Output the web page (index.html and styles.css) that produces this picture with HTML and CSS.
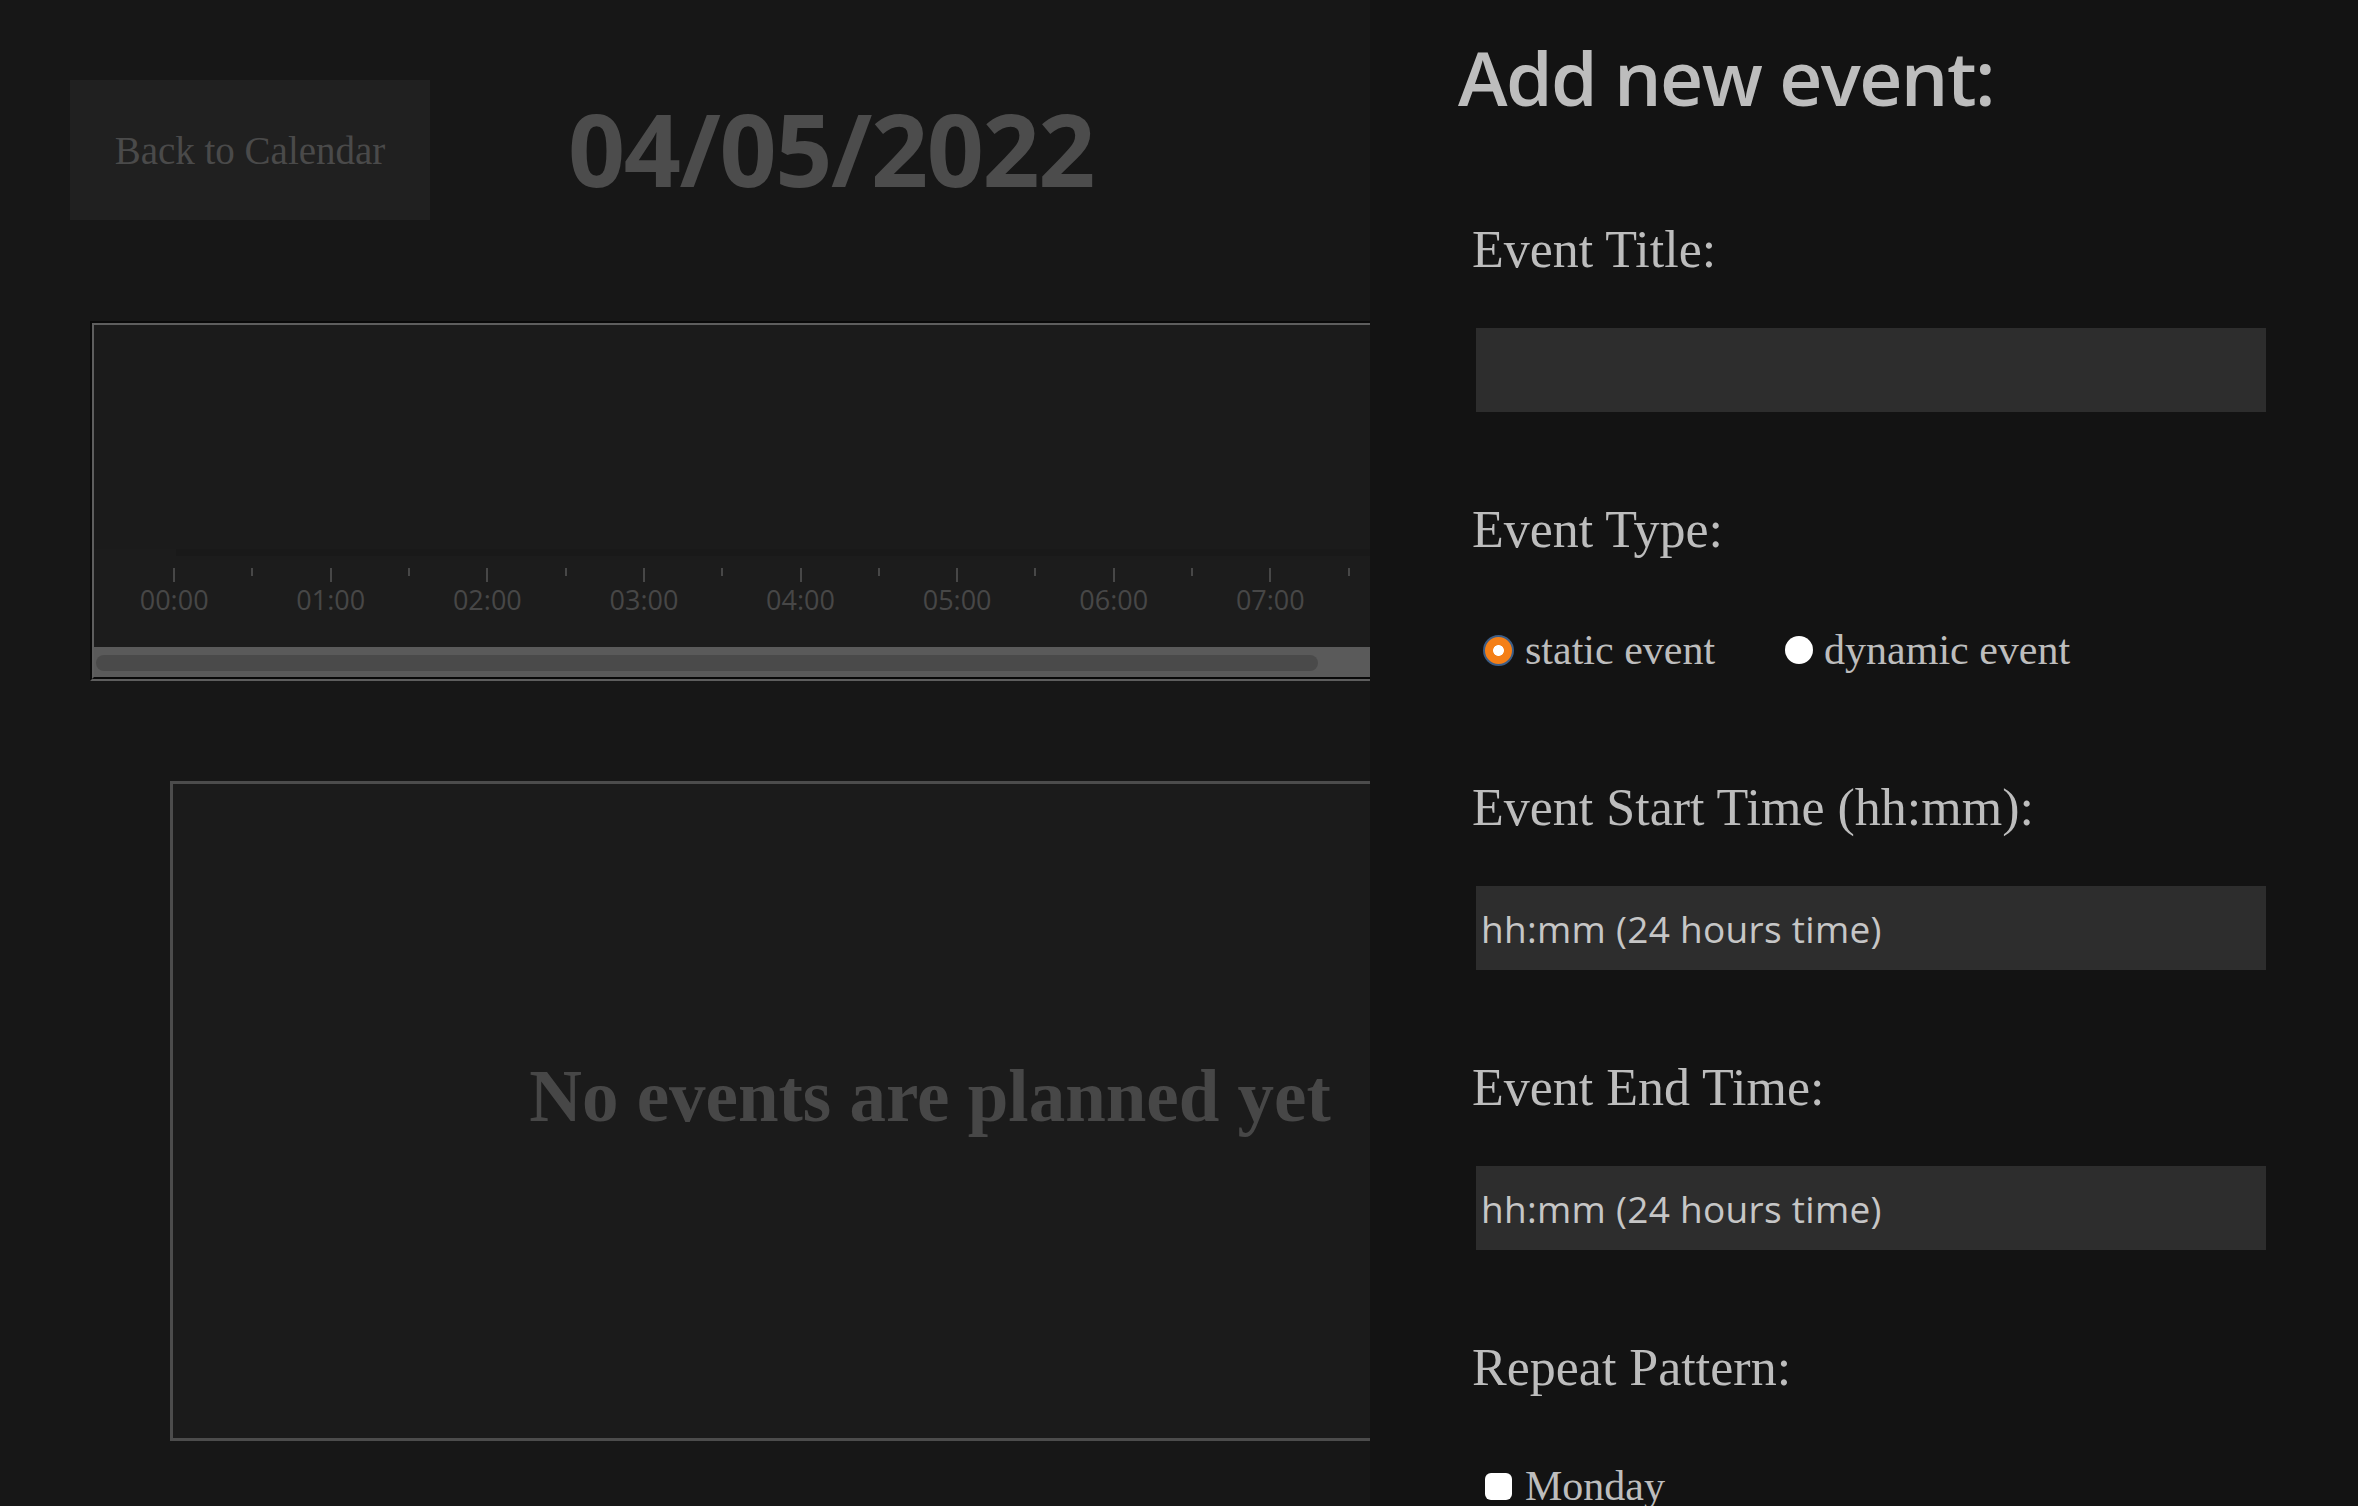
FILE: index.html
```html
<!DOCTYPE html>
<html lang="en">
<head>
<meta charset="utf-8">
<title>04/05/2022</title>
<link rel="stylesheet" href="styles.css">
</head>
<body>
<div class="page">
  <main class="left">
    <div class="top">
      <button class="back">Back to Calendar</button>
      <h2 class="date">04/05/2022</h2>
    </div>
    <div class="timeline">
      <div class="items"></div>
      <div class="axis">
        <div class="major"><span class="tick"></span><span class="lbl">00:00</span></div>
        <div class="minor"><span class="tick"></span></div>
        <div class="major"><span class="tick"></span><span class="lbl">01:00</span></div>
        <div class="minor"><span class="tick"></span></div>
        <div class="major"><span class="tick"></span><span class="lbl">02:00</span></div>
        <div class="minor"><span class="tick"></span></div>
        <div class="major"><span class="tick"></span><span class="lbl">03:00</span></div>
        <div class="minor"><span class="tick"></span></div>
        <div class="major"><span class="tick"></span><span class="lbl">04:00</span></div>
        <div class="minor"><span class="tick"></span></div>
        <div class="major"><span class="tick"></span><span class="lbl">05:00</span></div>
        <div class="minor"><span class="tick"></span></div>
        <div class="major"><span class="tick"></span><span class="lbl">06:00</span></div>
        <div class="minor"><span class="tick"></span></div>
        <div class="major"><span class="tick"></span><span class="lbl">07:00</span></div>
        <div class="minor"><span class="tick"></span></div>
      </div>
      <div class="scroll"><div class="thumb"></div></div>
    </div>
    <div class="events">
      <p>No events are planned yet</p>
    </div>
  </main>
  <aside class="panel">
    <h1>Add new event:</h1>
    <div class="field first">
      <label class="flabel">Event Title:</label>
      <input class="text" type="text">
    </div>
    <div class="field">
      <label class="flabel tight">Event Type:</label>
      <div class="radios">
        <label class="opt"><span class="radio on"></span>static event</label>
        <label class="opt"><span class="radio"></span>dynamic event</label>
      </div>
    </div>
    <div class="field after-radio">
      <label class="flabel">Event Start Time (hh:mm):</label>
      <input class="text" type="text" placeholder="hh:mm (24 hours time)">
    </div>
    <div class="field">
      <label class="flabel">Event End Time:</label>
      <input class="text" type="text" placeholder="hh:mm (24 hours time)">
    </div>
    <div class="field">
      <label class="flabel days">Repeat Pattern:</label>
      <label class="opt day"><span class="check"></span>Monday</label>
    </div>
  </aside>
</div>
</body>
</html>
```
FILE: styles.css
```css
html, body {
  margin: 0;
  padding: 0;
  background: #171717;
}

.page {
  display: grid;
  grid-template-columns: 1370px 988px;
  width: 2358px;
  height: 1506px;
  overflow: hidden;
}

/* ---------- left side ---------- */
.left {
  background: #171717;
  overflow: hidden;
  padding-top: 80px;
}

.top {
  display: flex;
  align-items: flex-start;
  height: 140px;
  padding-left: 70px;
}

.back {
  width: 360px;
  height: 140px;
  border: none;
  background: #202020;
  color: #4a4a4a;
  font-family: "Liberation Serif", serif;
  font-size: 39px;
  padding: 0;
  margin: 0;
}

.date {
  margin: -2px 0 0 138px;
  font-family: "Open Sans", sans-serif;
  font-weight: 700;
  font-size: 100px;
  line-height: 140px;
  letter-spacing: -1.4px;
  color: #4c4c4c;
}

.timeline {
  margin-top: 101px;
  margin-left: 90px;
  width: 1600px;
  border: 4px groove #5e5e5e;
  background: #1b1b1b;
  display: flex;
  flex-direction: column;
}

.items {
  height: 224px;
  background: #1b1b1b;
}

.axis {
  height: 98px;
  display: flex;
  padding-left: 41px;
  background: linear-gradient(#191919, #191919) no-repeat 82px 0 / 100% 7px, #1c1c1c;
}

.axis .major,
.axis .minor {
  flex: 0 0 78.3px;
  display: flex;
  flex-direction: column;
  align-items: center;
}

.tick {
  display: block;
  width: 2px;
  background: #474747;
  margin-top: 19px;
}

.major .tick { height: 14px; }
.minor .tick { height: 8px; }

.lbl {
  font-family: "Open Sans", sans-serif;
  font-size: 27px;
  line-height: 36px;
  color: #474747;
  white-space: nowrap;
}

.scroll {
  height: 30px;
  background: #5a5a5a;
  padding: 8px 0 6px 2px;
  box-sizing: border-box;
}

.thumb {
  width: 1222px;
  height: 16px;
  border-radius: 8px;
  background: #4a4a4a;
}

.events {
  margin-top: 100px;
  margin-left: 170px;
  width: 1520px;
  height: 660px;
  box-sizing: border-box;
  border: 3px solid #4c4c4c;
  background: #1b1b1b;
  display: flex;
  align-items: center;
  justify-content: center;
}

.events p {
  margin: 0 0 29px 0;
  font-family: "Liberation Serif", serif;
  font-weight: 700;
  font-size: 73px;
  color: #474747;
}

/* ---------- right panel ---------- */
.panel {
  background: #131313;
  padding: 32px 0 0 102px;
  color: #bdbdbd;
}

.panel h1 {
  margin: 0 0 0 -14px;
  font-family: "Open Sans", sans-serif;
  font-weight: 600;
  font-size: 75px;
  line-height: 90px;
  letter-spacing: -1.6px;
  color: #bdbdbd;
}

.field {
  margin-top: 88px;
}

.field.first {
  margin-top: 98px;
}

.field.after-radio {
  margin-top: 108px;
}

.flabel {
  display: block;
  font-family: "Liberation Serif", serif;
  font-size: 52px;
  line-height: 60px;
  margin-bottom: 48px;
  color: #bdbdbd;
}

.flabel.tight {
  margin-bottom: 70px;
}

.flabel.days {
  margin-bottom: 68px;
}

.text {
  display: block;
  box-sizing: border-box;
  width: 790px;
  height: 84px;
  margin: 0 0 0 4px;
  border: none;
  outline: none;
  background: #2d2d2d;
  padding: 0 0 0 5px;
  font-family: "Open Sans", sans-serif;
  font-size: 37px;
  letter-spacing: 0.3px;
  color: #c8c8c8;
}

.text::placeholder {
  color: #c6c6c6;
  opacity: 1;
}

.radios {
  display: flex;
  gap: 70px;
  margin-left: 11px;
}

.opt {
  display: flex;
  align-items: center;
  font-family: "Liberation Serif", serif;
  font-size: 42px;
  line-height: 40px;
  height: 40px;
  color: #bdbdbd;
  gap: 11px;
}

.radio {
  display: block;
  width: 28px;
  height: 28px;
  border-radius: 50%;
  background: #ffffff;
}

.radio.on {
  width: 31px;
  height: 31px;
  box-sizing: border-box;
  border: 2px solid #3c5d86;
  background: radial-gradient(circle, #ffffff 0 5px, #f47f17 5.8px);
}

.day {
  margin-left: 13px;
  gap: 13px;
}

.check {
  display: block;
  width: 27px;
  height: 27px;
  border-radius: 6px;
  background: #ffffff;
}
```
